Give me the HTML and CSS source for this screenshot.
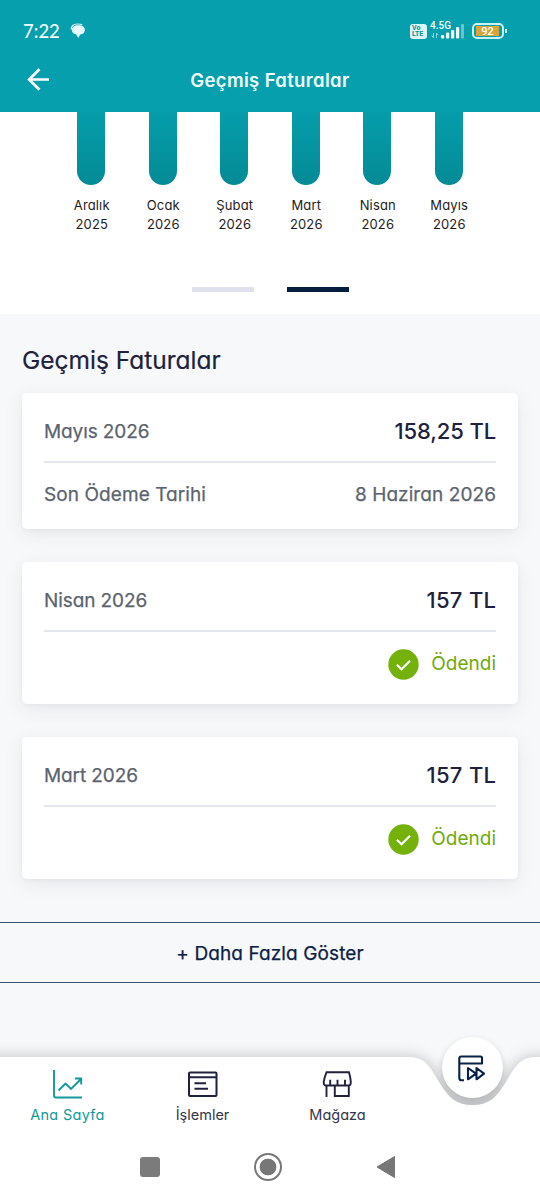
FILE: index.html
```html
<!DOCTYPE html>
<html lang="tr">
<head>
<meta charset="utf-8">
<title>Geçmiş Faturalar</title>
<link rel="stylesheet" href="styles.css">
</head>
<body>
<div class="screen">
  <header class="header">
    <div class="status">
      <span class="clock">7:22</span>
      <svg class="chat" width="16" height="16" viewBox="0 0 16 16"><path d="M1.200 6.500C1 3 3.500 1 7.500 1c2 0 3.500.3 4.800 1" fill="none" stroke="#d8f3f5" stroke-width="1.200"/><path d="M8.400 2.200c4 0 6.500 1.900 6.500 4.700 0 2.600-1.900 4.200-4.700 4.600L8.300 15 6.200 11.400C3.400 10.800 1.800 9.200 1.800 6.900c0-2.800 2.600-4.700 6.600-4.700z" fill="#e6fafb"/></svg>
      <span class="spacer"></span>
      <span class="volte"><span>Vo</span><span>LTE</span></span>
      <span class="signal">
        <span class="net">4.5G</span>
        <svg width="36" height="18" viewBox="0 0 36 18"><path d="M4.500 11v5M2.800 13.500l1.700 2.300M7.500 16v-5M9.200 13.200L7.500 11" fill="none" stroke="#8fd3d8"/><g fill="#effcfc"><rect x="12" y="13" width="3.200" height="3.500" rx="1"/><rect x="17" y="10.500" width="3.200" height="6" rx="1"/><rect x="22" y="8" width="3.200" height="8.500" rx="1"/><rect x="27" y="5" width="3.200" height="11.500" rx="1"/></g><rect x="32" y="2" width="3" height="14.500" rx="1" fill="#6cc4ca"/></svg>
      </span>
      <span class="battery"><span class="charge">92</span></span><span class="cap"></span>
    </div>
    <div class="titlebar">
      <svg class="back" width="24" height="24" viewBox="0 0 24 24"><path d="M22 11.500H2M12.500 1.300L2.200 11.500l10.300 10.200" fill="none" stroke="#fff" stroke-width="2.700"/></svg>
      <h1 class="title">Geçmiş Faturalar</h1>
    </div>
  </header>

  <section class="chart">
    <div class="bars">
      <div class="month"><span class="bar"></span><span>Aralık</span><span>2025</span></div>
      <div class="month"><span class="bar"></span><span>Ocak</span><span>2026</span></div>
      <div class="month"><span class="bar"></span><span>Şubat</span><span>2026</span></div>
      <div class="month"><span class="bar"></span><span>Mart</span><span>2026</span></div>
      <div class="month"><span class="bar"></span><span>Nisan</span><span>2026</span></div>
      <div class="month"><span class="bar"></span><span>Mayıs</span><span>2026</span></div>
    </div>
    <div class="pager"><span class="dash"></span><span class="dash active"></span></div>
  </section>

  <main class="invoices">
    <h2 class="heading">Geçmiş Faturalar</h2>
    <article class="card">
      <div class="row"><span class="label period">Mayıs 2026</span><span class="amount">158,25 TL</span></div>
      <div class="row due"><span class="label">Son Ödeme Tarihi</span><span class="label">8 Haziran 2026</span></div>
    </article>
    <article class="card">
      <div class="row"><span class="label period">Nisan 2026</span><span class="amount short">157 TL</span></div>
      <div class="row paid"><svg class="tick" width="31" height="31" viewBox="0 0 31 31"><circle cx="15.500" cy="15.500" r="15.200" fill="#74b10b"/><path d="M8.900 15.700l4.600 4.500 8.500-8.500" fill="none" stroke="#fff" stroke-width="2.200"/></svg><span class="done">Ödendi</span></div>
    </article>
    <article class="card">
      <div class="row"><span class="label period">Mart 2026</span><span class="amount short">157 TL</span></div>
      <div class="row paid"><svg class="tick" width="31" height="31" viewBox="0 0 31 31"><circle cx="15.500" cy="15.500" r="15.200" fill="#74b10b"/><path d="M8.900 15.700l4.600 4.500 8.500-8.500" fill="none" stroke="#fff" stroke-width="2.200"/></svg><span class="done">Ödendi</span></div>
    </article>
    <div class="more"><span>+ Daha Fazla Göster</span></div>
  </main>

  <footer class="footer">
    <svg class="shape" width="540" height="182" viewBox="0 0 540 182"><defs><linearGradient id="notch" x1="0" y1="0" x2="0" y2="1"><stop offset="0" stop-color="#4a4e52" stop-opacity="0"/><stop offset="1" stop-color="#4a4e52" stop-opacity=".15"/></linearGradient></defs><rect x="408" y="38" width="129" height="52" fill="url(#notch)"/><path class="panel" d="M-30 40H408C426 40 430 50 441 68C449 81 457 88 472.500 88S496 81 504 68C515 50 519 40 537 40H580V230H-30Z" fill="#fff"/></svg>
    <nav class="tabs">
      <a class="tab current"><svg width="32" height="32" viewBox="0 0 32 32" fill="none" stroke="#12999c" stroke-width="1.900"><path d="M2 1v25.500q0 2 2 2H30M6.500 21.500l7-7 5.500 5.500L29 10M23 9.500h6.200v6"/></svg><span>Ana Sayfa</span></a>
      <a class="tab"><svg width="32" height="32" viewBox="0 0 32 32" fill="none" stroke="#20223d" stroke-width="2"><rect x="2" y="3.500" width="27.500" height="23.500" rx="1"/><path d="M2 8.300h27.500M7.500 14.300h11.500M7.500 19.700h13.500"/></svg><span>İşlemler</span></a>
      <a class="tab"><svg width="32" height="32" viewBox="0 0 32 32" fill="none" stroke="#20223d" stroke-width="1.900"><path d="M4.500 3.300h22.500q1.500 5 1.800 9.500 0 3.700-1.800 3.700H3.500q-1.800 0-1.800-3.700Q2.500 8 4.500 3.300zM8.200 10.800v5.500M15.500 10.800v5.500M23 10.800v5.500M4.500 16.500v11.500M12.800 16.500v10.500h14v-10.500"/></svg><span>Mağaza</span></a>
    </nav>
    <div class="fab"><svg width="28" height="28" viewBox="0 0 28 28" fill="none" stroke="#092146" stroke-width="2.100" stroke-linejoin="round"><path d="M7 26.200H4.500q-2.200 0-2.200-2.200V4.500q0-2 2-2H23.500q1.500 0 1.500 1.500v5.500H2.500M11 14v11.300l8-5.600zM19.500 14v11.300l7.500-5.600z"/></svg></div>
    <div class="system">
      <span class="recent"></span>
      <span class="home"></span>
      <svg width="20" height="24" viewBox="0 0 20 24"><path d="M18.500 1.500v21L1 12z" fill="#777" stroke="#777" stroke-linejoin="round"/></svg>
    </div>
  </footer>
</div>
</body>
</html>
```
FILE: styles.css
```css
* { box-sizing: border-box; }
body { margin: 0; font-family: Inter, "Open Sans", sans-serif; font-feature-settings: "cv11" 1; color: #20223d; }
h1, h2 { margin: 0; }
.screen { width: 540px; height: 1199px; overflow: hidden; display: flex; flex-direction: column; background: #f7f8fa; }

.header { height: 112px; flex: none; background: #069fae; color: #f0fdfd; }
.status { display: flex; align-items: center; height: 48px; padding: 14px 33px 0 23px; }
.clock { width: 47px; font: 500 18.500px/24px Lato, sans-serif; white-space: nowrap; }
.spacer { flex: 1; }
.volte { display: flex; flex-direction: column; width: 17px; height: 15px; padding: 1px 0 0 2px; border-radius: 3px; background: #def7f8; color: #078c99; font: 700 7px/6.500px Roboto, sans-serif; }
.signal { position: relative; width: 36px; height: 18px; margin-left: 2px; }
.signal svg { display: block; }
.net { position: absolute; left: 1px; top: -2px; font: 500 10px/12px Roboto, sans-serif; }
.battery { display: flex; width: 32px; height: 16px; margin-left: 7px; padding: 1px 2px; border: 2px solid #c9f2f4; border-radius: 5px; }
.charge { width: 23px; background: #d9a43a; color: #fff; font: 500 11px/11px Roboto, sans-serif; text-align: center; }
.cap { width: 2px; height: 4px; margin-left: 1px; background: #c9f2f4; }
.titlebar { display: grid; grid-template-columns: 60px 1fr 60px; align-items: center; height: 64px; }
.back { margin-left: 27px; }
.title { text-align: center; font-size: 18.500px; font-weight: 600; line-height: 24px; letter-spacing: .35px; }

.chart { height: 202px; flex: none; background: #fff; }
.bars { display: grid; grid-template-columns: repeat(6, 71.500px); padding-left: 56px; }
.month { display: flex; flex-direction: column; align-items: center; font-size: 13px; line-height: 19.500px; letter-spacing: .15px; color: #1c1c1c; }
.bar { width: 28px; height: 73px; margin: 0 1px 10.500px 0; border-radius: 0 0 14px 14px; background: linear-gradient(#069dab, #048b95); }
.pager { display: flex; justify-content: center; gap: 33px; margin-top: 52.500px; }
.dash { width: 62px; height: 5px; background: #dfe2ec; }
.active { background: #041c3d; }

.invoices { height: 743px; flex: none; padding-top: 30px; }
.heading { height: 48.500px; padding-left: 22px; font-size: 24.500px; font-weight: 400; line-height: 33px; letter-spacing: 0; -webkit-text-stroke: .2px; }
.card { margin: 0 22px 33px; padding: 0 22px; border-radius: 5px; background: #fff; box-shadow: 0 5px 20px rgba(40, 50, 60, .08), 0 2px 4px rgba(40, 50, 60, .035); }
.row { display: flex; align-items: center; justify-content: space-between; height: 70px; padding-top: 8px; border-bottom: 2px solid #e1e6ef; }
.label { font-size: 19px; font-weight: 400; letter-spacing: .08px; color: #5b636e; -webkit-text-stroke: .25px; }
.period { padding-top: 1px; letter-spacing: -.1px; }
.amount { font-size: 22px; font-weight: 500; letter-spacing: -.12px; }
.short { letter-spacing: .3px; margin-right: -.3px; }
.due { height: 66px; padding: 0 0 3px; border: 0; }
.paid { height: 72px; padding: 0 0 6px; border: 0; justify-content: flex-end; gap: 12px; }
.done { margin-top: -3px; font-size: 19px; color: #70aa0b; }
.more { display: flex; align-items: center; justify-content: center; height: 61px; padding-top: 2px; margin-top: 43.500px; border: solid #3c526c; border-width: 1px 0; font-size: 19px; font-weight: 400; letter-spacing: .1px; color: #0c2145; -webkit-text-stroke: .25px; }

.footer { position: relative; height: 142px; flex: none; }
.shape { position: absolute; left: 0; top: -40px; }
.panel { filter: drop-shadow(0 -2px 7px rgba(30, 35, 40, .2)); }
.tabs { position: relative; display: grid; grid-template-columns: repeat(3, 135px); height: 80px; padding-top: 12px; }
.tab { display: flex; flex-direction: column; align-items: center; font-size: 14.500px; line-height: 20px; color: #33374b; }
.tab span { margin-top: 4px; }
.current { color: #12999c; letter-spacing: .3px; }
.fab { position: absolute; left: 442px; top: -20px; display: flex; align-items: center; justify-content: center; width: 61px; height: 61px; padding-right: 3px; border-radius: 50%; background: #fff; box-shadow: 0 3px 7px rgba(0, 0, 0, .18); }
.system { position: relative; display: flex; align-items: center; height: 60px; padding: 0 0 1px 140px; }
.recent { width: 20px; height: 20px; border-radius: 3px; background: #7b7b7b; }
.home { width: 28px; height: 28px; margin: 0 94px 0 94px; border: 2px solid #777; border-radius: 50%; background: radial-gradient(circle, #777 8px, transparent 8.700px); }
```
